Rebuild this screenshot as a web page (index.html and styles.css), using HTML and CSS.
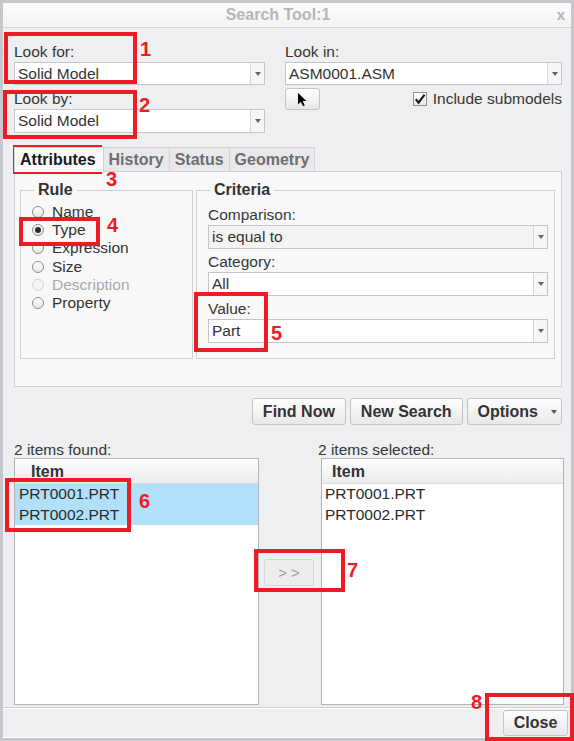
FILE: index.html
```html
<!DOCTYPE html>
<html lang="en">
<head>
  <meta charset="UTF-8">
  <title>Search Tool:1</title>
  <link rel="stylesheet" href="styles.css">
</head>
<body>

<div class="shot">

  <div class="window">

    <div class="titlebar">
      <span class="title">Search Tool:1</span>
      <span class="close-x">x</span>
    </div>

    <div class="content">

      <div class="lookup">
        <div class="lookup-left">
          <div class="field-label">Look for:</div>
          <div class="select"><span class="select-value">Solid Model</span><span class="select-arrow"></span></div>
          <div class="field-label second">Look by:</div>
          <div class="select tall"><span class="select-value">Solid Model</span><span class="select-arrow"></span></div>
        </div>
        <div class="lookup-right">
          <div class="field-label">Look in:</div>
          <div class="select"><span class="select-value">ASM0001.ASM</span><span class="select-arrow"></span></div>
          <div class="pick-row">
            <button class="btn pick-btn">
              <svg width="11" height="15" viewBox="0 0 11 15"><path d="M1 1 L1 12.5 L3.8 9.8 L6 14.2 L7.8 13.4 L5.6 9 L9.4 9 Z" fill="#000"/></svg>
            </button>
            <label class="check">
              <span class="check-box">
                <svg width="12" height="12" viewBox="0 0 12 12"><path d="M1.8 6.2 L4.6 9.6 L10.6 1.6" fill="none" stroke="#1e1e1e" stroke-width="2.2"/></svg>
              </span>
              Include submodels
            </label>
          </div>
        </div>
      </div>

      <div class="tabs">
        <div class="tab active">Attributes</div>
        <div class="tab">History</div>
        <div class="tab">Status</div>
        <div class="tab">Geometry</div>
      </div>

      <div class="tab-panel">
        <fieldset class="group rule-group">
          <legend>Rule</legend>
          <div class="radio"><span class="radio-dot"></span>Name</div>
          <div class="radio"><span class="radio-dot checked"></span>Type</div>
          <div class="radio"><span class="radio-dot"></span>Expression</div>
          <div class="radio"><span class="radio-dot"></span>Size</div>
          <div class="radio disabled"><span class="radio-dot"></span>Description</div>
          <div class="radio"><span class="radio-dot"></span>Property</div>
        </fieldset>
        <fieldset class="group criteria-group">
          <legend>Criteria</legend>
          <div class="crit-label first">Comparison:</div>
          <div class="select crit-select off"><span class="select-value">is equal to</span><span class="select-arrow"></span></div>
          <div class="crit-label">Category:</div>
          <div class="select crit-select"><span class="select-value">All</span><span class="select-arrow"></span></div>
          <div class="crit-label">Value:</div>
          <div class="select crit-select"><span class="select-value">Part</span><span class="select-arrow"></span></div>
        </fieldset>
      </div>

      <div class="actions">
        <button class="btn">Find Now</button>
        <button class="btn">New Search</button>
        <button class="btn options-btn">Options<span class="btn-arrow"></span></button>
      </div>

      <div class="results">
        <div class="results-label">2 items found:</div>
        <div></div>
        <div class="results-label shift">2 items selected:</div>

        <div class="list">
          <div class="list-head">Item</div>
          <div class="list-row selected">PRT0001.PRT</div>
          <div class="list-row selected">PRT0002.PRT</div>
        </div>
        <div class="transfer">
          <button class="btn move-btn">&gt; &gt;</button>
        </div>
        <div class="list list-right">
          <div class="list-head">Item</div>
          <div class="list-row">PRT0001.PRT</div>
          <div class="list-row">PRT0002.PRT</div>
        </div>
      </div>

    </div>

    <div class="footer">
      <button class="btn close-btn">Close</button>
    </div>

  </div>

  <!-- numbered callouts drawn over the dialog -->
  <div class="mark mark-1"></div><span class="num num-1">1</span>
  <div class="mark mark-2"></div><span class="num num-2">2</span>
  <div class="mark mark-3"></div><span class="num num-3">3</span>
  <div class="mark mark-4"></div><span class="num num-4">4</span>
  <div class="mark mark-5"></div><span class="num num-5">5</span>
  <div class="mark mark-6"></div><span class="num num-6">6</span>
  <div class="mark mark-7"></div><span class="num num-7">7</span>
  <div class="mark mark-8"></div><span class="num num-8">8</span>

</div>

</body>
</html>
```

FILE: styles.css
```css
body {
  margin: 0;
  font-family: "Liberation Sans", Arial, sans-serif;
  color: #383838;
  background-color: #fff;
}

.shot {
  position: relative;
  width: 574px;
  height: 741px;
}

.window {
  width: 574px;
  height: 741px;
  box-sizing: border-box;
  border: 3px solid #c6c8cb;
  background-color: #eeeff1;
  display: flex;
  flex-direction: column;
}

/* title bar */

.titlebar {
  position: relative;
  height: 25px;
  box-sizing: border-box;
  border-bottom: 1px solid #d3d4d6;
  background: linear-gradient(#fdfdfd, #f3f3f4);
  display: flex;
  align-items: center;
  justify-content: center;
}

.title {
  margin-left: -18px;
  font-size: 16px;
  font-weight: bold;
  color: #b5b6b8;
}

.close-x {
  position: absolute;
  right: 6px;
  top: 3px;
  font-size: 15px;
  font-weight: bold;
  color: #b3b4b6;
}

.content {
  flex: 1;
  padding: 15px 9px 0 11px;
}

/* look for / look in */

.lookup {
  display: flex;
  justify-content: space-between;
}

.lookup-left {
  width: 251px;
}

.lookup-right {
  width: 277px;
}

.field-label, .crit-label {
  font-size: 15.5px;
  line-height: 18px;
  margin-bottom: 1px;
  color: #363636;
}

.field-label.second {
  margin-top: 5px;
}

.select {
  height: 23px;
  box-sizing: border-box;
  border: 1px solid #c4c5c7;
  background-color: #fff;
  display: flex;
}

.select.tall {
  height: 24px;
}

.select-value {
  flex: 1;
  padding-left: 3px;
  font-size: 15.5px;
  line-height: 21px;
  color: #333;
}

.select-arrow {
  width: 13px;
  border-left: 1px solid #d6d7d9;
  background-color: #f6f6f7;
  display: flex;
  align-items: center;
  justify-content: center;
}

.select-arrow::after {
  content: "";
  border-left: 3.5px solid transparent;
  border-right: 3.5px solid transparent;
  border-top: 4px solid #666;
}

.pick-row {
  margin-top: 3px;
  height: 22px;
  display: flex;
  justify-content: space-between;
  align-items: center;
}

.btn {
  font-family: "Liberation Sans", Arial, sans-serif;
  font-size: 16px;
  font-weight: bold;
  color: #333;
  background: linear-gradient(#fefefe, #e8e8e9);
  border: 1px solid #c3c4c6;
  border-radius: 3px;
  padding: 0 10px;
  height: 27px;
  line-height: 24px;
  margin: 0;
}

.pick-btn {
  width: 35px;
  height: 22px;
  padding: 0;
  display: flex;
  align-items: center;
  justify-content: center;
}

.check {
  display: flex;
  align-items: center;
  gap: 6px;
  font-size: 15.5px;
  color: #363636;
}

.check-box {
  width: 14px;
  height: 14px;
  box-sizing: border-box;
  border: 1px solid #8e8f91;
  background: linear-gradient(#fff, #ececec);
  display: flex;
  align-items: center;
  justify-content: center;
}

/* tabs */

.tabs {
  position: relative;
  z-index: 1;
  margin-top: 14px;
  margin-bottom: -1px;
  height: 25px;
  display: flex;
  align-items: flex-start;
}

.tab {
  height: 24px;
  box-sizing: border-box;
  padding: 0 5px 0 5px;
  border: 1px solid #d3d4d6;
  border-bottom: none;
  margin-left: -1px;
  background-color: #e9e9eb;
  font-size: 16px;
  font-weight: bold;
  line-height: 23px;
  color: #6e6e70;
}

.tab.active {
  margin-left: 0;
  height: 25px;
  padding-right: 7px;
  background-color: #f9f9fa;
  color: #1a1a1a;
}

.tab-panel {
  height: 216px;
  box-sizing: border-box;
  border: 1px solid #cdced0;
  background-color: #f8f8f9;
  padding: 9px 6px 0 5px;
  display: flex;
  gap: 3px;
  align-items: flex-start;
}

.group {
  margin: 0;
  padding: 0;
  min-width: 0;
  height: 178px;
  box-sizing: border-box;
  border: 1px solid #cfd0d2;
}

.group legend {
  margin-left: 2px;
  padding: 0 4px;
  font-size: 16px;
  font-weight: bold;
  line-height: 18px;
  color: #333;
}

.rule-group {
  width: 173px;
  padding: 4px 0 0 11px;
}

.criteria-group {
  flex: 1;
  padding: 0 6px 0 11px;
}

.radio {
  height: 18.2px;
  display: flex;
  align-items: center;
  gap: 8px;
  font-size: 15.5px;
  color: #333;
}

.radio.disabled {
  color: #a9a9ab;
}

.radio-dot {
  width: 12px;
  height: 12px;
  box-sizing: border-box;
  border: 1px solid #8c8d8f;
  border-radius: 50%;
  background: linear-gradient(#fff, #e6e6e8);
  display: flex;
  align-items: center;
  justify-content: center;
}

.radio.disabled .radio-dot {
  border-color: #d0d1d3;
  background: #f4f4f5;
}

.radio-dot.checked::after {
  content: "";
  width: 6px;
  height: 6px;
  border-radius: 50%;
  background-color: #2a2a2a;
}

.crit-label {
  margin-top: 4px;
}

.crit-label.first {
  margin-top: 7px;
}

.crit-select {
  height: 24px;
}

.crit-select .select-value {
  line-height: 22px;
}

.crit-select.off {
  background-color: #f3f3f4;
}

/* buttons under the panel */

.actions {
  margin-top: 11px;
  display: flex;
  justify-content: flex-end;
  gap: 4px;
}

.options-btn {
  padding-right: 4px;
  display: flex;
  align-items: center;
}

.btn-arrow {
  margin-left: 13px;
  border-left: 3px solid transparent;
  border-right: 3px solid transparent;
  border-top: 4px solid #555;
}

/* result lists */

.results {
  margin-top: 17px;
  width: 550px;
  display: grid;
  grid-template-columns: 245px 62px 243px;
}

.results-label {
  font-size: 15.5px;
  line-height: 16px;
  color: #363636;
}

.results-label.shift {
  margin-left: -3px;
}

.list {
  height: 247px;
  box-sizing: border-box;
  border: 1px solid #b3b4b6;
  background-color: #fff;
}

.list-head {
  height: 25px;
  box-sizing: border-box;
  border-bottom: 1px solid #dcdcde;
  background: linear-gradient(#fdfdfd, #ececed);
  padding-left: 16px;
  font-size: 16px;
  font-weight: bold;
  line-height: 25px;
  color: #333;
}

.list-row {
  height: 20.5px;
  padding-left: 4px;
  font-size: 15.5px;
  line-height: 20px;
  color: #2a2a2a;
}

.list-row.selected {
  background-color: #b1e0fa;
}

.list-right .list-head {
  padding-left: 10px;
}

.list-right .list-row {
  padding-left: 3px;
}

.transfer {
  padding: 101px 0 0 5px;
}

.move-btn {
  width: 50px;
  padding: 0;
  font-weight: normal;
  font-size: 15px;
  color: #9c9c9e;
  background: #ececed;
  border-color: #d6d7d9;
}

/* footer */

.footer {
  height: 31px;
  box-sizing: border-box;
  border-top: 1px solid #cfd0d2;
  box-shadow: inset 0 1px 0 #fff, inset 0 -1px 0 #fff;
  padding: 2px 3px 0 0;
  display: flex;
  justify-content: flex-end;
  align-items: flex-start;
}

.close-btn {
  width: 65px;
  height: 26px;
  padding: 0;
}

/* callouts */

.mark {
  position: absolute;
  box-sizing: border-box;
  border: 4px solid #ed1c24;
}

.mark-1 { left: 4px; top: 32px; width: 133px; height: 52px; }
.mark-2 { left: 3px; top: 90px; width: 134px; height: 49px; }
.mark-3 { left: 13px; top: 145px; width: 89px; height: 29px; }
.mark-4 { left: 19px; top: 217px; width: 81px; height: 29px; }
.mark-5 { left: 194px; top: 292px; width: 74px; height: 60px; }
.mark-6 { left: 5px; top: 478px; width: 126px; height: 54px; }
.mark-7 { left: 254px; top: 549px; width: 91px; height: 43px; }
.mark-8 { left: 485px; top: 693px; width: 89px; height: 48px; }

.num {
  position: absolute;
  font-size: 20px;
  font-weight: bold;
  line-height: 20px;
  color: #ed1c24;
}

.num-1 { left: 140px; top: 39px; }
.num-2 { left: 139px; top: 95px; }
.num-3 { left: 106px; top: 169px; }
.num-4 { left: 107px; top: 215px; }
.num-5 { left: 271px; top: 323px; }
.num-6 { left: 139px; top: 491px; }
.num-7 { left: 347px; top: 560px; }
.num-8 { left: 471px; top: 692px; }
```
